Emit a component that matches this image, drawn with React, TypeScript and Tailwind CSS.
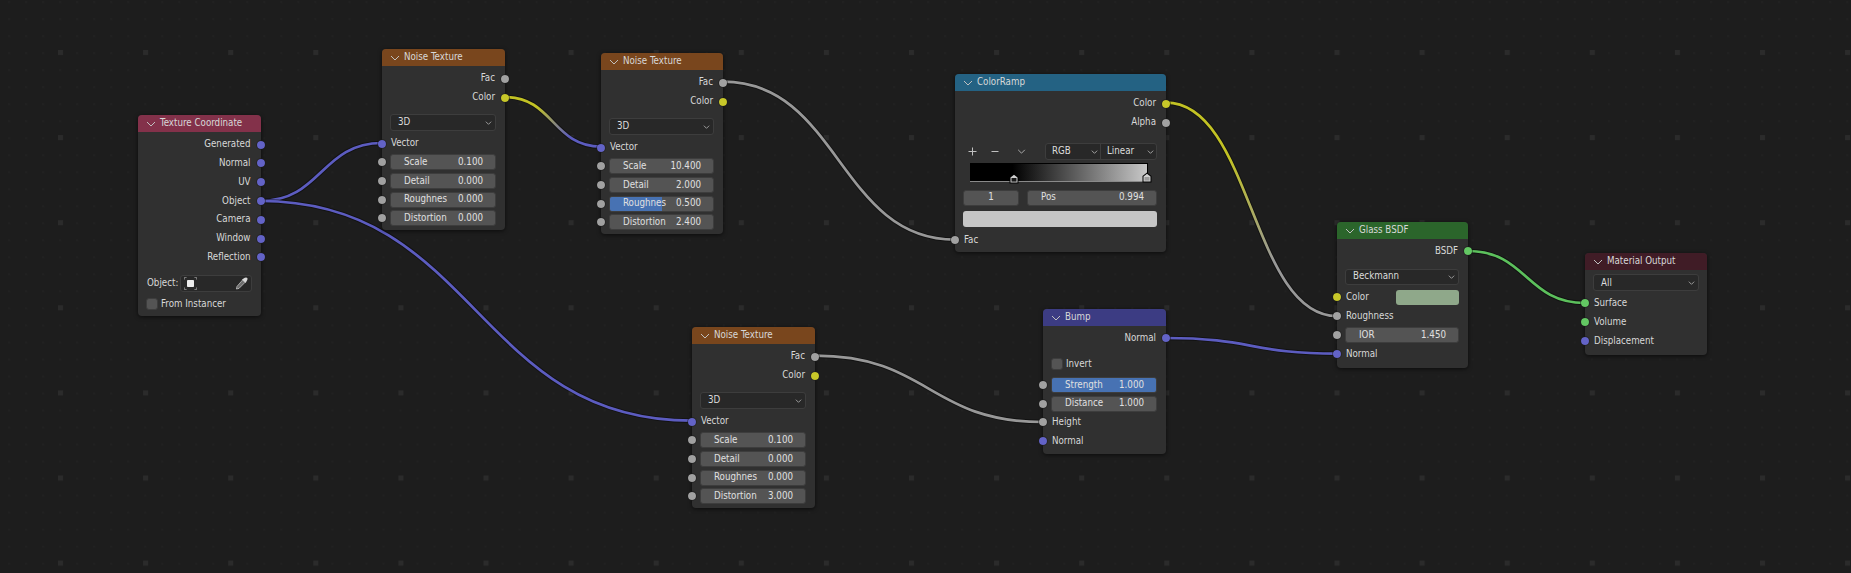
import type { ReactNode } from "react";

const VECTOR = "bg-[#6363c7]";
const GRAY = "bg-[#a1a1a1]";
const YELLOW = "bg-[#c7c729]";
const GREEN = "bg-[#63c763]";

type Link = { id: string; x1: number; y1: number; x2: number; y2: number; from: string; to: string };

const links: Link[] = [
  { id: "a", x1: 260.5, y1: 201, x2: 382, y2: 143, from: "#5c5cc0", to: "#5c5cc0" },
  { id: "b", x1: 260.5, y1: 201, x2: 692, y2: 420.7, from: "#5c5cc0", to: "#5c5cc0" },
  { id: "c", x1: 505, y1: 97, x2: 601, y2: 146.7, from: "#c2c224", to: "#5c5cc0" },
  { id: "d", x1: 723, y1: 81.7, x2: 955, y2: 239.7, from: "#989898", to: "#989898" },
  { id: "e", x1: 1166, y1: 102.7, x2: 1337, y2: 316, from: "#c2c224", to: "#989898" },
  { id: "f", x1: 815, y1: 355.7, x2: 1043, y2: 422, from: "#989898", to: "#989898" },
  { id: "g", x1: 1166, y1: 338, x2: 1337, y2: 353.7, from: "#5c5cc0", to: "#5c5cc0" },
  { id: "h", x1: 1468, y1: 251, x2: 1585, y2: 303, from: "#5cc05c", to: "#5cc05c" },
];

function linkPath(l: Link) {
  const dx = (l.x2 - l.x1) * 0.5;
  return `M${l.x1} ${l.y1} C${l.x1 + dx} ${l.y1} ${l.x2 - dx} ${l.y2} ${l.x2} ${l.y2}`;
}

function Background() {
  return (
    <svg className="absolute inset-0" width="1851" height="573">
      <defs>
        <pattern id="minor" width="17.02" height="17.02" patternUnits="userSpaceOnUse" x="8" y="1">
          <rect width="2" height="2" fill="#212121" />
        </pattern>
        <pattern id="major" width="85.1" height="85.1" patternUnits="userSpaceOnUse" x="58" y="50">
          <rect width="5" height="5" fill="#2b2b2b" />
        </pattern>
      </defs>
      <rect width="1851" height="573" fill="url(#minor)" />
      <rect width="1851" height="573" fill="url(#major)" />
    </svg>
  );
}

function Links() {
  return (
    <svg className="absolute inset-0" width="1851" height="573" fill="none">
      <defs>
        {links.map((l) => (
          <linearGradient key={l.id} id={`link-${l.id}`} gradientUnits="userSpaceOnUse" x1={l.x1} y1={l.y1} x2={l.x2} y2={l.y2}>
            <stop offset="0.3" stopColor={l.from} />
            <stop offset="0.7" stopColor={l.to} />
          </linearGradient>
        ))}
      </defs>
      {links.map((l) => (
        <g key={l.id}>
          <path d={linkPath(l)} stroke="#000" strokeOpacity="0.4" strokeWidth="4.6" />
          <path d={linkPath(l)} stroke={`url(#link-${l.id})`} strokeWidth="2.7" />
        </g>
      ))}
    </svg>
  );
}

function Chevron({ className }: { className: string }) {
  return (
    <svg className={className} viewBox="0 0 10 6" fill="none" stroke="currentColor" strokeWidth="1">
      <path d="M1 1 L5 5 L9 1" />
    </svg>
  );
}

function Socket({ color, side }: { color: string; side: "left" | "right" }) {
  return (
    <span
      className={`absolute top-1/2 -translate-y-1/2 w-[10px] h-[10px] rounded-full border border-[#1a1a1a]/50 bg-clip-padding ${color} ${
        side === "left" ? "left-[-5px]" : "right-[-5px]"
      }`}
    />
  );
}

function Node({ pos, header, title, children }: { pos: string; header: string; title: string; children: ReactNode }) {
  return (
    <div className={`absolute ${pos} rounded-[4px] bg-[#303030] shadow-[0_1px_4px_rgba(0,0,0,0.6)]`}>
      <div className={`h-[17px] flex items-center pl-[8px] rounded-t-[4px] text-[#d8d8d8] ${header}`}>
        <Chevron className="w-[10px] h-[6px] mr-[4px] text-[#c0c0c0]" />
        <span>{title}</span>
      </div>
      {children}
    </div>
  );
}

function Output({ label, color }: { label: string; color: string }) {
  return (
    <div className="relative h-[19px] flex items-center justify-end pr-[10px] text-[#d8d8d8]">
      {label}
      <Socket color={color} side="right" />
    </div>
  );
}

function Input({ label, color }: { label: string; color: string }) {
  return (
    <div className="relative h-[19px] flex items-center pl-[9px] text-[#d8d8d8]">
      {label}
      <Socket color={color} side="left" />
    </div>
  );
}

function Select({ label, className }: { label: string; className: string }) {
  return (
    <div className={`flex items-center justify-between pl-[7px] pr-[3px] rounded-[3px] border border-[#3d3d3d] bg-[#282828] text-[#dcdcdc] ${className}`}>
      <span>{label}</span>
      <Chevron className="w-[7px] h-[4px] text-[#d0d0d0]" />
    </div>
  );
}

function NumberField({ label, value, fill }: { label: string; value: string; fill?: string }) {
  return (
    <div className="relative flex-1 h-[16px] rounded-[3px] border border-[#3d3d3d] bg-[#545454] overflow-hidden text-[#e0e0e0]">
      {fill && <div className={`absolute inset-y-0 left-0 bg-[#4772b3] ${fill}`} />}
      <div className="relative h-full flex items-center justify-between pl-[13px] pr-[12px]">
        <span>{label}</span>
        <span>{value}</span>
      </div>
    </div>
  );
}

function NumberInput({ label, value, fill }: { label: string; value: string; fill?: string }) {
  return (
    <div className="relative h-[18.7px] flex items-center pl-[8px] pr-[9px]">
      <NumberField label={label} value={value} fill={fill} />
      <Socket color={GRAY} side="left" />
    </div>
  );
}

function NoiseTexture({ pos, rows }: { pos: string; rows: { label: string; value: string; fill?: string }[] }) {
  return (
    <Node pos={pos} header="bg-[#79461d]" title="Noise Texture">
      <div className="pt-[3px] pb-[2.4px]">
        <Output label="Fac" color={GRAY} />
        <Output label="Color" color={YELLOW} />
        <div className="mt-[7px] pl-[8px] pr-[9px]">
          <Select label="3D" className="h-[17px]" />
        </div>
        <div className="mt-[3px]">
          <Input label="Vector" color={VECTOR} />
        </div>
        {rows.map((r) => (
          <NumberInput key={r.label} label={r.label} value={r.value} fill={r.fill} />
        ))}
      </div>
    </Node>
  );
}

function Checkbox({ label }: { label: string }) {
  return (
    <div className="flex items-center h-[19px] pl-[8px] text-[#d8d8d8]">
      <span className="w-[12px] h-[12px] rounded-[3px] border border-[#3d3d3d] bg-[#545454] mr-[3px]" />
      {label}
    </div>
  );
}

function ObjectIcon() {
  return (
    <svg className="w-[13px] h-[13px]" viewBox="0 0 13 13" fill="none" stroke="#a8a8a8" strokeWidth="0.7">
      <path d="M0.4 2.6 V0.4 H2.6 M10.4 0.4 H12.6 V2.6 M12.6 10.4 V12.6 H10.4 M2.6 12.6 H0.4 V10.4" />
      <rect x="3" y="3" width="7" height="7" rx="0.8" fill="#ececec" stroke="none" />
    </svg>
  );
}

function Eyedropper() {
  return (
    <svg className="w-[13px] h-[13px]" viewBox="0 0 13 13">
      <path d="M7.6 3 L10 5.4 L4 11.4 L1.4 12 L2 9.4 Z" fill="#6e6e6e" stroke="#cfcfcf" strokeWidth="0.7" />
      <path d="M7 2.4 L9.8 0.8 Q11.5 0 12.3 1 Q13 2 12 3.4 L10.6 6 Z" fill="#d8d8d8" />
    </svg>
  );
}

function RampHandle({ className, fill }: { className: string; fill: string }) {
  return (
    <svg className={`absolute ${className}`} width="10" height="11" viewBox="0 0 10 11">
      <path d="M0.5 10.5 V4 L5 0.5 L9.5 4 V10.5 Z" fill="#000" />
      <path d="M1.5 9.5 V4.5 L5 1.8 L8.5 4.5 V9.5 Z" fill="#d0d0d0" />
      <rect x="2.5" y="5" width="5" height="3.6" fill={fill} />
    </svg>
  );
}

function ColorRamp() {
  return (
    <Node pos="left-[955px] top-[74px] w-[211px]" header="bg-[#246283]" title="ColorRamp">
      <div className="pt-[3px] pb-[2px]">
        <Output label="Color" color={YELLOW} />
        <Output label="Alpha" color={GRAY} />
        <div className="mt-[11px] h-[17px] pl-[13px] pr-[9px] flex items-center text-[#c0c0c0]">
          <svg className="w-[9px] h-[9px]" viewBox="0 0 9 9" stroke="currentColor" strokeWidth="1">
            <path d="M4.5 0.5 V8.5 M0.5 4.5 H8.5" />
          </svg>
          <svg className="w-[8px] h-[9px] ml-[14px]" viewBox="0 0 8 9" stroke="currentColor" strokeWidth="1">
            <path d="M0.5 4.5 H7.5" />
          </svg>
          <Chevron className="w-[9px] h-[5px] ml-[18px] mr-[19px]" />
          <div className="flex-1 h-full flex rounded-[3px] border border-[#3d3d3d] bg-[#282828] text-[#dcdcdc]">
            <div className="w-[55px] flex items-center justify-between pl-[6px] pr-[2px] border-r border-[#3d3d3d]">
              <span>RGB</span>
              <Chevron className="w-[7px] h-[4px]" />
            </div>
            <div className="flex-1 flex items-center justify-between pl-[6px] pr-[2px]">
              <span>Linear</span>
              <Chevron className="w-[7px] h-[4px]" />
            </div>
          </div>
        </div>
        <div className="relative mt-[3px] ml-[15px] mr-[18px] h-[19px] border-b border-[#8a8a8a]">
          <div className="h-[18px] border-t border-r border-[#000] bg-[linear-gradient(90deg,#000_24%,#c8c8c8_100%)]" />
          <RampHandle className="left-[39px] top-[10px]" fill="#1a1a1a" />
          <RampHandle className="right-[-4px] top-[9px]" fill="#9a9a9a" />
        </div>
        <div className="mt-[7.5px] flex gap-[8px] pl-[8px] pr-[9px] text-[#e0e0e0]">
          <div className="w-[56px] h-[16px] rounded-[3px] border border-[#3d3d3d] bg-[#545454] flex items-center justify-center">1</div>
          <NumberField label="Pos" value="0.994" />
        </div>
        <div className="mt-[5px] ml-[8px] mr-[9px] h-[16px] rounded-[3px] bg-[#c6c6c6]" />
        <div className="mt-[4px]">
          <Input label="Fac" color={GRAY} />
        </div>
      </div>
    </Node>
  );
}

export default function App() {
  return (
    <div className="relative w-[1851px] h-[573px] overflow-hidden bg-[#1d1d1d] font-['DejaVu_Sans_Condensed','DejaVu_Sans',sans-serif] [font-stretch:condensed] text-[9.7px]">
      <Background />
      <Links />

      <Node pos="left-[138px] top-[115px] w-[122.5px]" header="bg-[#83314a]" title="Texture Coordinate">
        <div className="pt-[3px] pb-[2.4px]">
          {["Generated", "Normal", "UV", "Object", "Camera", "Window", "Reflection"].map((s) => (
            <div key={s} className="-mb-[0.2px]">
              <Output label={s} color={VECTOR} />
            </div>
          ))}
          <div className="mt-[8px] flex items-center pl-[9px] pr-[9px] text-[#d8d8d8]">
            <span className="mr-[2px]">Object:</span>
            <div className="flex-1 h-[17px] flex items-center justify-between pl-[3px] pr-[3px] rounded-[3px] border border-[#3d3d3d] bg-[#282828]">
              <ObjectIcon />
              <Eyedropper />
            </div>
          </div>
          <div className="mt-[3px]">
            <Checkbox label="From Instancer" />
          </div>
        </div>
      </Node>

      <NoiseTexture
        pos="left-[382px] top-[49px] w-[123px]"
        rows={[
          { label: "Scale", value: "0.100" },
          { label: "Detail", value: "0.000" },
          { label: "Roughnes", value: "0.000" },
          { label: "Distortion", value: "0.000" },
        ]}
      />
      <NoiseTexture
        pos="left-[601px] top-[53px] w-[122px]"
        rows={[
          { label: "Scale", value: "10.400" },
          { label: "Detail", value: "2.000" },
          { label: "Roughnes", value: "0.500", fill: "w-1/2" },
          { label: "Distortion", value: "2.400" },
        ]}
      />
      <NoiseTexture
        pos="left-[692px] top-[327px] w-[123px]"
        rows={[
          { label: "Scale", value: "0.100" },
          { label: "Detail", value: "0.000" },
          { label: "Roughnes", value: "0.000" },
          { label: "Distortion", value: "3.000" },
        ]}
      />

      <ColorRamp />

      <Node pos="left-[1043px] top-[309px] w-[123px]" header="bg-[#3c3c83]" title="Bump">
        <div className="pt-[2.5px] pb-[3.5px]">
          <Output label="Normal" color={VECTOR} />
          <div className="mt-[7px]">
            <Checkbox label="Invert" />
          </div>
          <div className="mt-[2px]">
            <NumberInput label="Strength" value="1.000" fill="w-full" />
            <NumberInput label="Distance" value="1.000" />
          </div>
          <Input label="Height" color={GRAY} />
          <Input label="Normal" color={VECTOR} />
        </div>
      </Node>

      <Node pos="left-[1337px] top-[222px] w-[131px]" header="bg-[#2b652b]" title="Glass BSDF">
        <div className="pt-[2.5px] pb-[4.5px]">
          <Output label="BSDF" color={GREEN} />
          <div className="mt-[8px] pl-[8px] pr-[9px]">
            <Select label="Beckmann" className="h-[16px]" />
          </div>
          <div className="relative mt-[3px] h-[19px] flex items-center justify-between pl-[9px] pr-[9px] text-[#d8d8d8]">
            Color
            <span className="w-[63px] h-[15px] rounded-[3px] bg-[#8fa88a]" />
            <Socket color={YELLOW} side="left" />
          </div>
          <div className="mb-[0.3px]">
            <Input label="Roughness" color={GRAY} />
          </div>
          <NumberInput label="IOR" value="1.450" />
          <div className="mt-[0.4px]">
            <Input label="Normal" color={VECTOR} />
          </div>
        </div>
      </Node>

      <Node pos="left-[1585px] top-[253px] w-[122px]" header="bg-[#401c26]" title="Material Output">
        <div className="pt-[4.3px] pb-[4.7px]">
          <div className="pl-[8px] pr-[8px]">
            <Select label="All" className="h-[17px]" />
          </div>
          <div className="mt-[2.3px]">
            <Input label="Surface" color={GREEN} />
            <Input label="Volume" color={GREEN} />
            <Input label="Displacement" color={VECTOR} />
          </div>
        </div>
      </Node>
    </div>
  );
}
